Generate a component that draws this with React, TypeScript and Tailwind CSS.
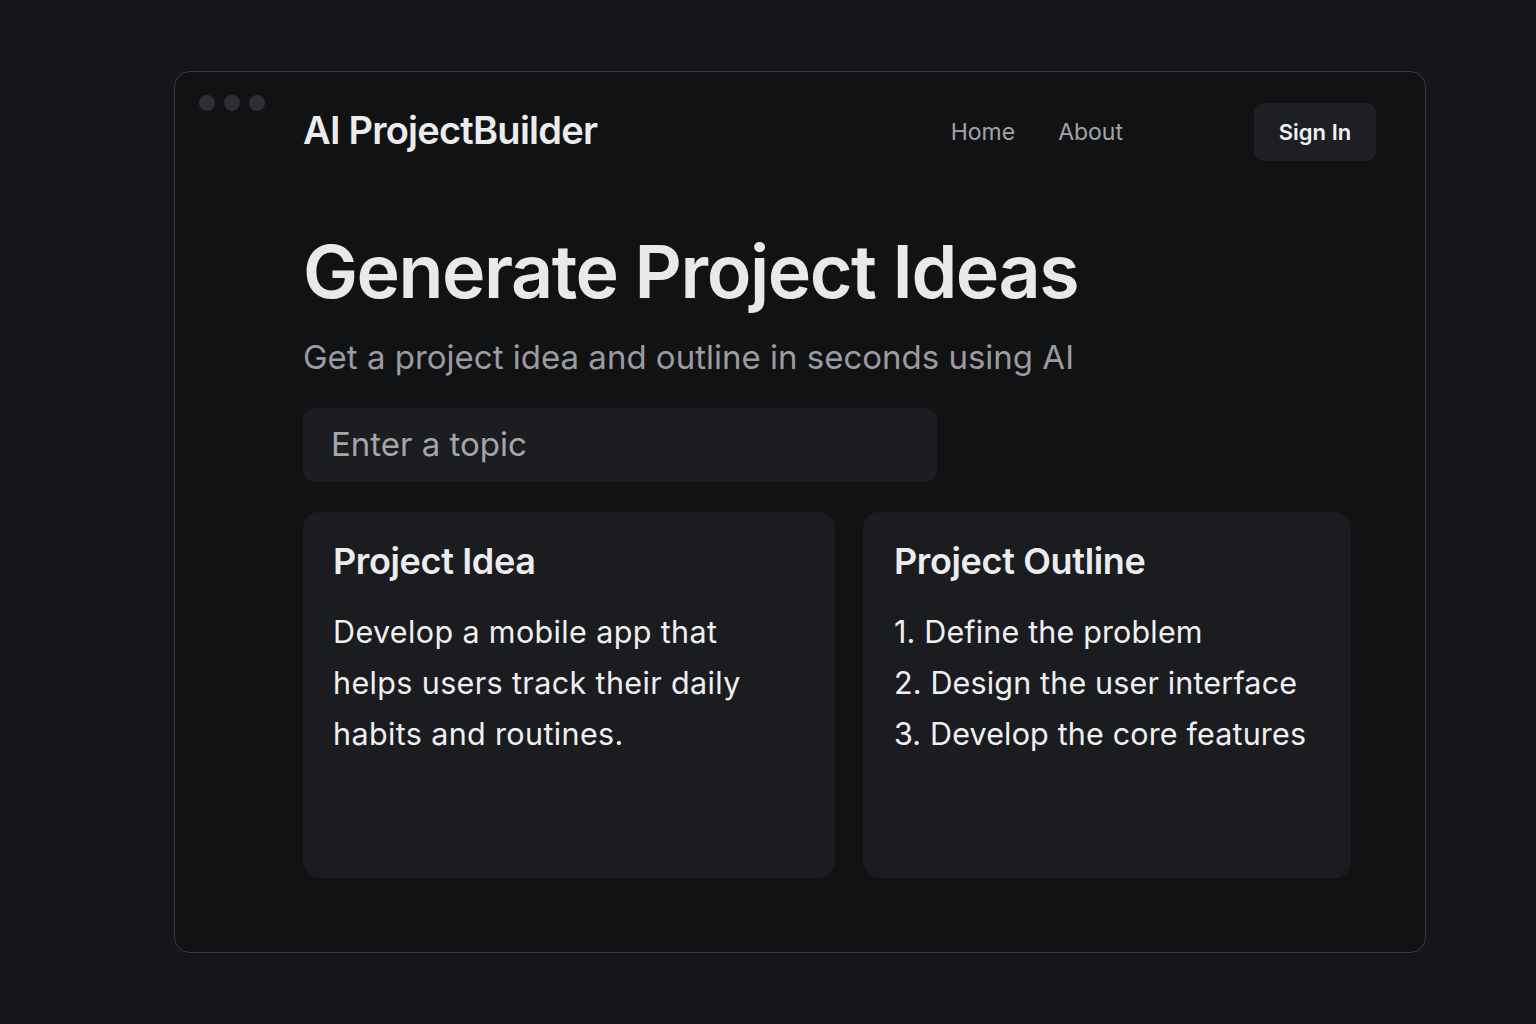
export default function App() {
  return (
    <div
      className="min-h-screen w-full bg-[#151619] pt-[71px] pl-[174px]"
      style={{ fontFamily: "Inter, 'Noto Sans', sans-serif" }}
    >
      <div className="w-[1252px] h-[882px] rounded-[16px] border border-[#3a3b3f] bg-[#111214] flex pt-[23px] pl-[24px] pr-[49px]">
        <div className="flex gap-[9px] w-[66px] shrink-0">
          <span className="w-4 h-4 rounded-full bg-[#2e2f33]" />
          <span className="w-4 h-4 rounded-full bg-[#2e2f33]" />
          <span className="w-4 h-4 rounded-full bg-[#2e2f33]" />
        </div>
        <div className="flex-1 ml-[38px] pt-[8px]">
          <header className="flex items-center h-[58px]">
            <h1 className="-mt-[3px] text-[38px] font-semibold tracking-[-0.02em] text-[#ececee]">AI ProjectBuilder</h1>
            <nav className="ml-auto flex gap-[43px] text-[23px] text-[#a3a3a8] mr-[131px]">
              <a>Home</a>
              <a>About</a>
            </nav>
            <button className="h-[58px] w-[122px] rounded-[10px] bg-[#1e1f22] text-[22px] font-semibold text-[#f2f2f4]">
              Sign In
            </button>
          </header>

          <h2 className="mt-[74px] text-[73.5px] leading-none font-semibold tracking-[-0.02em] text-[#e9e9eb]">
            Generate Project Ideas
          </h2>
          <p className="mt-[24px] text-[33px] text-[#9b9ba0]">Get a project idea and outline in seconds using AI</p>

          <div className="mt-[26px] w-[634px] h-[74px] rounded-[12px] bg-[#1c1d20] flex items-center px-[28px]">
            <input
              className="w-full bg-transparent outline-none text-[33px] text-[#e5e5e7] placeholder:text-[#a5a5aa]"
              placeholder="Enter a topic"
            />
          </div>

          <div className="mt-[30px] flex gap-[28px]">
            <div className="w-[532px] h-[366px] rounded-[16px] bg-[#1b1c1f] px-[30px] pt-[22px]">
              <h3 className="text-[36px] font-semibold tracking-[-0.01em] text-[#ececee]">Project Idea</h3>
              <p className="mt-[18px] max-w-[440px] text-[30.5px] leading-[51px] tracking-[0.012em] text-[#f0f0f2]">
                Develop a mobile app that helps users track their daily habits and routines.
              </p>
            </div>
            <div className="w-[488px] h-[366px] rounded-[16px] bg-[#1b1c1f] px-[31px] pt-[22px]">
              <h3 className="text-[36px] font-semibold tracking-[-0.01em] text-[#ececee]">Project Outline</h3>
              <ol className="mt-[18px] text-[30.5px] leading-[51px] tracking-[0.005em] text-[#f0f0f2]">
                <li>1. Define the problem</li>
                <li>2. Design the user interface</li>
                <li>3. Develop the core features</li>
              </ol>
            </div>
          </div>
        </div>
      </div>
    </div>
  );
}
